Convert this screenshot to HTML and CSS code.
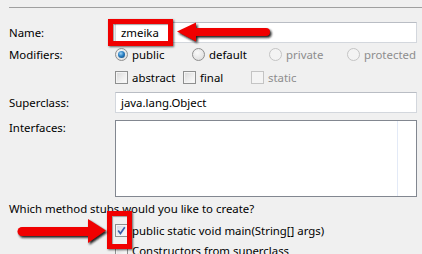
FILE: index.html
```html
<!DOCTYPE html>
<html lang="en">
<head>
  <meta charset="UTF-8">
  <meta name="viewport" content="width=device-width, initial-scale=1.0">
  <title>New Java Class</title>
  <link rel="stylesheet" href="styles.css">
</head>
<body>
  <div class="page">
    <div class="sep"></div>

    <div class="row nameRow">
      <span class="label">Name:</span>
      <div class="field">zmeika</div>
    </div>

    <div class="row modsRow">
      <span class="label">Modifiers:</span>
      <div class="options radios">
        <span class="opt"><span class="radio checked"></span>public</span>
        <span class="opt"><span class="radio"></span>default</span>
        <span class="opt disabled"><span class="radio"></span>private</span>
        <span class="opt disabled"><span class="radio"></span>protected</span>
      </div>
    </div>

    <div class="row">
      <span class="label"></span>
      <div class="options checks">
        <span class="opt"><span class="check"></span>abstract</span>
        <span class="opt"><span class="check"></span>final</span>
        <span class="opt disabled"><span class="check"></span>static</span>
      </div>
    </div>

    <div class="row superRow">
      <span class="label">Superclass:</span>
      <div class="field">java.lang.Object</div>
    </div>

    <div class="row ifaceRow">
      <span class="label">Interfaces:</span>
      <div class="list"><div class="listCol"></div></div>
    </div>

    <p class="question">Which method stubs would you like to create?</p>

    <div class="row stubRow">
      <span class="label"></span>
      <span class="opt"><span class="check checked">
        <svg viewBox="0 0 13 13" width="13" height="13"><path d="M3.2 6.6 L5.4 9.6 L9.8 3.2" fill="none" stroke="#3a5fa8" stroke-width="1.7"/></svg>
      </span>public static void main(String[] args)</span>
    </div>
    <div class="row stubRow">
      <span class="label"></span>
      <span class="opt"><span class="check"></span>Constructors from superclass</span>
    </div>
  </div>

  <!-- annotations drawn over the dialog -->
  <div class="mark nameMark"></div>
  <div class="mark stubMark"></div>
  <svg class="arrows" viewBox="0 0 422 254" width="422" height="254">
    <defs>
      <filter id="soft" x="-10%" y="-30%" width="120%" height="160%">
        <feGaussianBlur stdDeviation="0.8"/>
      </filter>
    </defs>
    <g fill="#1a1a1a" stroke="#1a1a1a" filter="url(#soft)" transform="translate(1.5 1.8)">
      <polygon points="177,31.5 196,22.5 196,41.5" stroke="none"/>
      <line x1="194" y1="32" x2="266" y2="32" stroke-width="8" stroke-linecap="round"/>
      <polygon points="106,230.5 88,219 88,243" stroke="none"/>
      <line x1="22" y1="231.5" x2="90" y2="231.5" stroke-width="9" stroke-linecap="round"/>
    </g>
    <g fill="#f00000" stroke="#f00000">
      <polygon points="177,31.5 196,22.5 196,41.5" stroke="none"/>
      <line x1="194" y1="32" x2="266" y2="32" stroke-width="8" stroke-linecap="round"/>
      <polygon points="106,230.5 88,219 88,243" stroke="none"/>
      <line x1="22" y1="231.5" x2="90" y2="231.5" stroke-width="9" stroke-linecap="round"/>
    </g>
  </svg>
</body>
</html>
```

FILE: styles.css
```css
* {
  box-sizing: border-box;
  margin: 0;
  padding: 0;
}
body {
  background-color: #f0f0f0;
  font-family: "Noto Sans", "Open Sans", sans-serif;
  font-size: 11.4px;
  color: #000;
  width: 422px;
  height: 254px;
  overflow: hidden;
  position: relative;
}

.page {
  padding: 0 5px 0 9px;
}
.sep {
  margin: 7px -5px 0 0;
  height: 1px;
  background-color: #a0a0a0;
}

.row {
  display: flex;
  align-items: center;
  height: 22px;
}
.label {
  width: 106px;
  flex: none;
  white-space: nowrap;
}
.nameRow {
  margin-top: 14px;
  height: 21px;
}
.modsRow {
  height: 23px;
}
.superRow {
  margin-top: 4px;
  height: 21px;
}
.ifaceRow {
  margin-top: 7px;
  height: 77px;
  align-items: flex-start;
}
.ifaceRow .label {
  line-height: 16px;
}

.field {
  width: 302px;
  height: 21px;
  line-height: 19px;
  padding-left: 5px;
  background-color: #fff;
  border: 1px solid #d3d7dd;
  border-top-color: #b9bdc4;
}
.list {
  width: 302px;
  height: 77px;
  background-color: #fff;
  border: 1px solid #828790;
  display: flex;
}
.listCol {
  width: 282px;
  border-right: 1px solid #e3eaf7;
}

.question {
  margin-top: 3px;
  height: 18px;
  line-height: 18px;
}
.stubRow {
  height: 20px;
}
.question + .stubRow {
  margin-top: 2px;
}

.options {
  display: grid;
  align-items: center;
}
.radios {
  grid-template-columns: 77px 77px 78px auto;
}
.checks {
  grid-template-columns: 68px 68px auto;
}
.opt {
  display: flex;
  align-items: center;
  white-space: nowrap;
}
.opt.disabled {
  color: #8d8d8d;
}

.radio,
.check {
  width: 13px;
  height: 13px;
  margin-right: 4px;
  flex: none;
}
.radio {
  border-radius: 50%;
  border: 1px solid #8f8f8f;
  background: radial-gradient(circle at 40% 35%, #fafafa 0%, #e2e2e2 70%, #d6d6d6 100%);
  display: flex;
  align-items: center;
  justify-content: center;
}
.radio.checked::after {
  content: "";
  width: 7px;
  height: 7px;
  border-radius: 50%;
  background: radial-gradient(circle at 40% 35%, #9fd4f6 0%, #2a7fc2 45%, #0d3f72 100%);
}
.disabled .radio {
  border-color: #c4c4c4;
  background: #f3f3f3;
}
.check {
  border: 1px solid #8e8f8f;
  background: linear-gradient(135deg, #d8d8d8 0%, #f0f0f0 60%, #fcfcfc 100%);
  box-shadow: inset 0 0 0 1px #f4f4f4;
}
.check svg {
  display: block;
  margin: -1px;
}
.check.checked {
  background: linear-gradient(135deg, #cfd6e2 0%, #eef1f6 60%, #fbfbfb 100%);
}
.disabled .check {
  border-color: #c4c4c4;
  background: #f4f4f4;
}

.mark {
  position: absolute;
  border: 5px solid #f00000;
  box-shadow: 1px 1px 2px rgba(0, 0, 0, 0.6), inset 1px 1px 1px rgba(0, 0, 0, 0.35);
}
.nameMark {
  left: 108px;
  top: 19px;
  width: 65px;
  height: 27px;
}
.stubMark {
  left: 107px;
  top: 211px;
  width: 25px;
  height: 38px;
}
.arrows {
  position: absolute;
  left: 0;
  top: 0;
  pointer-events: none;
}
```
